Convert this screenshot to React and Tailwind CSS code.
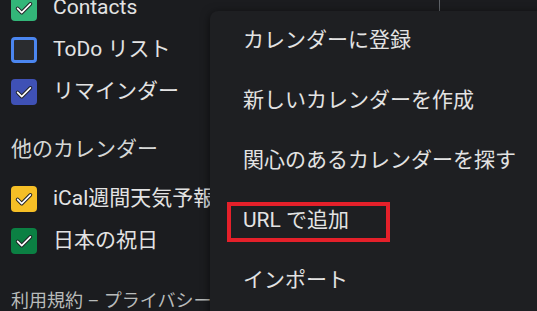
const calendars = [
  { name: "Contacts", color: "bg-[#33b679]", checked: true },
  { name: "ToDo リスト", color: "bg-[#2a2c2f]", checked: false },
  { name: "リマインダー", color: "bg-[#3f51b5]", checked: true },
];

const others = [
  { name: "iCal週間天気予報(", color: "bg-[#f6bf26]", checked: true },
  { name: "日本の祝日", color: "bg-[#0b8043]", checked: true },
];

const menuItems = [
  "カレンダーに登録",
  "新しいカレンダーを作成",
  "関心のあるカレンダーを探す",
  "URL で追加",
  "インポート",
];

function Check() {
  return (
    <svg viewBox="0 0 24 24" className="w-[22px] h-[22px]">
      <path d="M5 12.5l4.5 4.5L19 7.5" fill="none" stroke="#202124" strokeWidth="4" strokeLinecap="round" strokeLinejoin="round" />
      <path d="M5 12.5l4.5 4.5L19 7.5" fill="none" stroke="#ffffff" strokeWidth="1.8" strokeLinecap="round" strokeLinejoin="round" />
    </svg>
  );
}

function Row({ item }) {
  return (
    <div className="h-[42px] flex items-center">
      <div
        className={`w-[26px] h-[26px] rounded-[4px] flex items-center justify-center shrink-0 ${item.color} ${
          item.checked ? "" : "border-[3px] border-[#4b86f0]"
        }`}
      >
        {item.checked && <Check />}
      </div>
      <span className="ml-[16px] text-[21px] text-[#e3e3e3] whitespace-nowrap">{item.name}</span>
    </div>
  );
}

export default function App() {
  return (
    <div
      className="relative w-[537px] h-[311px] overflow-hidden bg-[#1b1c1f] flex"
      style={{ fontFamily: "Roboto, 'Noto Sans CJK JP', sans-serif" }}
    >
      {/* サイドバー */}
      <div className="w-[215px] shrink-0 pl-[11px] -mt-[13px] overflow-hidden">
        {calendars.map((c) => (
          <Row key={c.name} item={c} />
        ))}
        <div className="h-[40px] mt-[17px] flex items-center text-[21px] text-[#d5d7d6] whitespace-nowrap">
          他のカレンダー
        </div>
        <div className="mt-[8px]">
          {others.map((c) => (
            <Row key={c.name} item={c} />
          ))}
        </div>
        <div className="h-[24px] mt-[26px] flex items-center text-[18px] text-[#b8bbba] whitespace-nowrap">
          利用規約 – プライバシー
        </div>
      </div>

      {/* メイン */}
      <div className="flex-1 flex">
        <div className="w-[224px]" />
        <div className="border-l border-[#5f6368] h-[11px]" />
      </div>

      {/* メニュー */}
      <div className="absolute left-[210px] top-[11px] w-[340px] h-[320px] bg-[#1e1f22] rounded-[8px] shadow-[0_2px_10px_rgba(0,0,0,0.6)]">
        {menuItems.map((label) => (
          <div key={label} className="relative h-[60px] flex items-center pl-[33px] text-[21px] text-[#e3e3e3] whitespace-nowrap">
            {label}
            {label === "URL で追加" && (
              <div className="absolute left-[17px] top-[11px] w-[163px] h-[40px] border-4 border-[#e5202a]" />
            )}
          </div>
        ))}
      </div>
    </div>
  );
}
